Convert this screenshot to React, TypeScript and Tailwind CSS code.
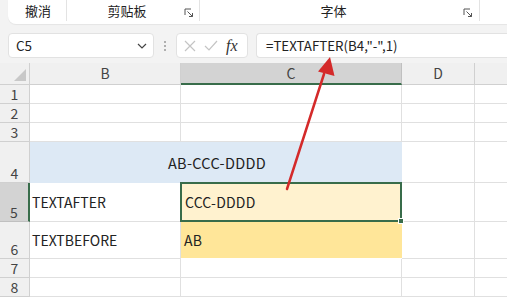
import React from "react";

const font = { fontFamily: '"Noto Sans CJK SC", "Noto Sans", sans-serif' };

function Launcher() {
  return (
    <svg width="10" height="10" viewBox="0 0 10 10" className="text-[#555]">
      <path d="M1 1 H7 M1 1 V7" stroke="currentColor" strokeWidth="1" fill="none" />
      <path d="M3.5 3.5 L8.5 8.5 M8.5 5 V8.5 H5" stroke="currentColor" strokeWidth="1" fill="none" />
    </svg>
  );
}

const rows = [
  { n: "1", h: 19 },
  { n: "2", h: 19 },
  { n: "3", h: 19 },
  { n: "4", h: 41 },
  { n: "5", h: 39 },
  { n: "6", h: 37 },
  { n: "7", h: 19 },
  { n: "8", h: 19 },
];

export default function App() {
  return (
    <div className="relative w-[507px] h-[297px] overflow-hidden bg-[#f3f3f3] text-[#222]" style={font}>
      {/* Ribbon */}
      <div className="flex h-[24px]">
        <div className="w-[8px]" />
        <div className="flex flex-1 bg-white rounded-bl-[8px] shadow-[0_1px_1px_rgba(0,0,0,0.06)]">
          <div className="w-[59px] flex items-center justify-center text-[13px] pl-[2px] border-r border-[#e3e3e3] h-[21px]">撤消</div>
          <div className="w-[133px] relative flex items-center justify-center text-[13px] border-r border-[#e3e3e3] h-[21px]">
            <span className="pr-[12px]">剪贴板</span>
            <span className="absolute right-[5px] top-[8px] flex"><Launcher /></span>
          </div>
          <div className="w-[280px] relative flex items-center justify-center text-[13px] border-r border-[#e3e3e3] h-[21px]">
            <span className="pr-[12px]">字体</span>
            <span className="absolute right-[6px] top-[8px] flex"><Launcher /></span>
          </div>
          <div className="flex-1" />
        </div>
      </div>

      {/* Formula bar */}
      <div className="flex items-center h-[25px] mt-[9px]">
        <div className="w-[8px]" />
        <div className="w-[146px] h-[25px] bg-white border border-[#e2e2e2] rounded-[4px] flex items-center justify-between pl-[7px] pr-[6px] text-[13.5px]">
          <span>C5</span>
          <svg width="10" height="6" viewBox="0 0 10 6"><path d="M1 1 L5 5 L9 1" stroke="#444" strokeWidth="1.2" fill="none" /></svg>
        </div>
        <div className="w-[22px] flex flex-col items-center gap-[2px]">
          <span className="w-[2px] h-[2px] bg-[#999] rounded-full" />
          <span className="w-[2px] h-[2px] bg-[#999] rounded-full" />
          <span className="w-[2px] h-[2px] bg-[#999] rounded-full" />
        </div>
        <div className="w-[72px] h-[25px] bg-white border border-[#e2e2e2] rounded-[4px] flex items-center pl-[7px] gap-[8px]">
          <svg width="12" height="12" viewBox="0 0 12 12"><path d="M1 1 L11 11 M11 1 L1 11" stroke="#c4c4c4" strokeWidth="1.2" /></svg>
          <svg width="14" height="12" viewBox="0 0 14 12"><path d="M1 6 L5 10 L13 1" stroke="#c4c4c4" strokeWidth="1.2" fill="none" /></svg>
          <span className="text-[16px] italic text-[#333] leading-none" style={{ fontFamily: '"Liberation Serif", serif' }}>fx</span>
        </div>
        <div className="w-[8px]" />
        <div className="flex-1 h-[25px] bg-white border border-[#e2e2e2] rounded-l-[4px] border-r-0 flex items-center pl-[9px] text-[13.3px]">
          =TEXTAFTER(B4,"-",1)
        </div>
      </div>

      {/* Grid */}
      <div
        className="grid mt-[5px] bg-white"
        style={{
          gridTemplateColumns: "30px 151px 221px 73px 32px",
          gridTemplateRows: `22px ${rows.map((r) => r.h + "px").join(" ")}`,
        }}
      >
        <div className="bg-[#f0f0f0] border-r border-b border-[#d0d0d0] relative">
          <svg className="absolute right-[3px] bottom-[3px]" width="12" height="12" viewBox="0 0 12 12"><path d="M12 0 L12 12 L0 12 Z" fill="#c8c8c8" /></svg>
        </div>
        <div className="bg-[#f0f0f0] border-r border-b border-[#d0d0d0] flex items-center justify-center text-[14px] text-[#444]">B</div>
        <div className="bg-[#d3d3d3] border-r border-[#c0c0c0] border-b-2 border-b-[#386c4a] flex items-center justify-center text-[14px] text-[#444]">C</div>
        <div className="bg-[#f0f0f0] border-r border-b border-[#d0d0d0] flex items-center justify-center text-[14px] text-[#444]">D</div>
        <div className="bg-[#f0f0f0] border-b border-[#d0d0d0]" />

        {rows.map((r) => {
          const sel = r.n === "5";
          const rh = (
            <div
              key={r.n + "h"}
              className={
                sel
                  ? "bg-[#d3d3d3] border-b border-[#c0c0c0] border-r-2 border-r-[#386c4a] flex items-end justify-center text-[14px] text-[#444] leading-[18px]"
                  : "bg-[#f0f0f0] border-b border-r border-[#d0d0d0] flex items-end justify-center text-[14px] text-[#444] leading-[18px]"
              }
            >
              {r.n}
            </div>
          );
          if (r.n === "4") {
            return (
              <React.Fragment key={r.n}>
                {rh}
                <div className="col-span-2 bg-[#dde9f5] flex items-center justify-center text-[14.5px] pl-[2px] tracking-[0.3px]">AB-CCC-DDDD</div>
                <div className="border-r border-b border-[#e0e0e0]" />
                <div className="border-b border-[#e0e0e0]" />
              </React.Fragment>
            );
          }
          let b: React.ReactNode = null;
          let c: React.ReactNode = null;
          let cCls = "border-r border-b border-[#e0e0e0]";
          if (r.n === "5") {
            b = "TEXTAFTER";
            c = "CCC-DDDD";
            cCls = "relative bg-[#fff2cf] border-2 border-[#386c4a] -ml-px -mt-px";
          }
          if (r.n === "6") {
            b = "TEXTBEFORE";
            c = "AB";
            cCls = "bg-[#ffe699] border-b border-white";
          }
          return (
            <React.Fragment key={r.n}>
              {rh}
              <div className="border-r border-b border-[#e0e0e0] flex items-center pl-[2px] text-[14px]">{b}</div>
              <div className={cCls + " flex items-center pl-[3px] text-[14px] tracking-[0.2px]"}>
                {c}
                {r.n === "5" && <span className="absolute right-[-4px] bottom-[-4px] w-[6px] h-[6px] bg-[#386c4a] border border-white" />}
              </div>
              <div className="border-r border-b border-[#e0e0e0]" />
              <div className="border-b border-[#e0e0e0]" />
            </React.Fragment>
          );
        })}
      </div>

      {/* Annotation arrow */}
      <svg className="absolute left-0 top-0 pointer-events-none" width="507" height="297">
        <line x1="287" y1="189" x2="324" y2="74" stroke="#d42a2a" strokeWidth="2.5" strokeLinecap="round" />
        <path d="M330 57 L334.5 76 L318 71.5 Z" fill="#d42a2a" />
      </svg>
    </div>
  );
}
